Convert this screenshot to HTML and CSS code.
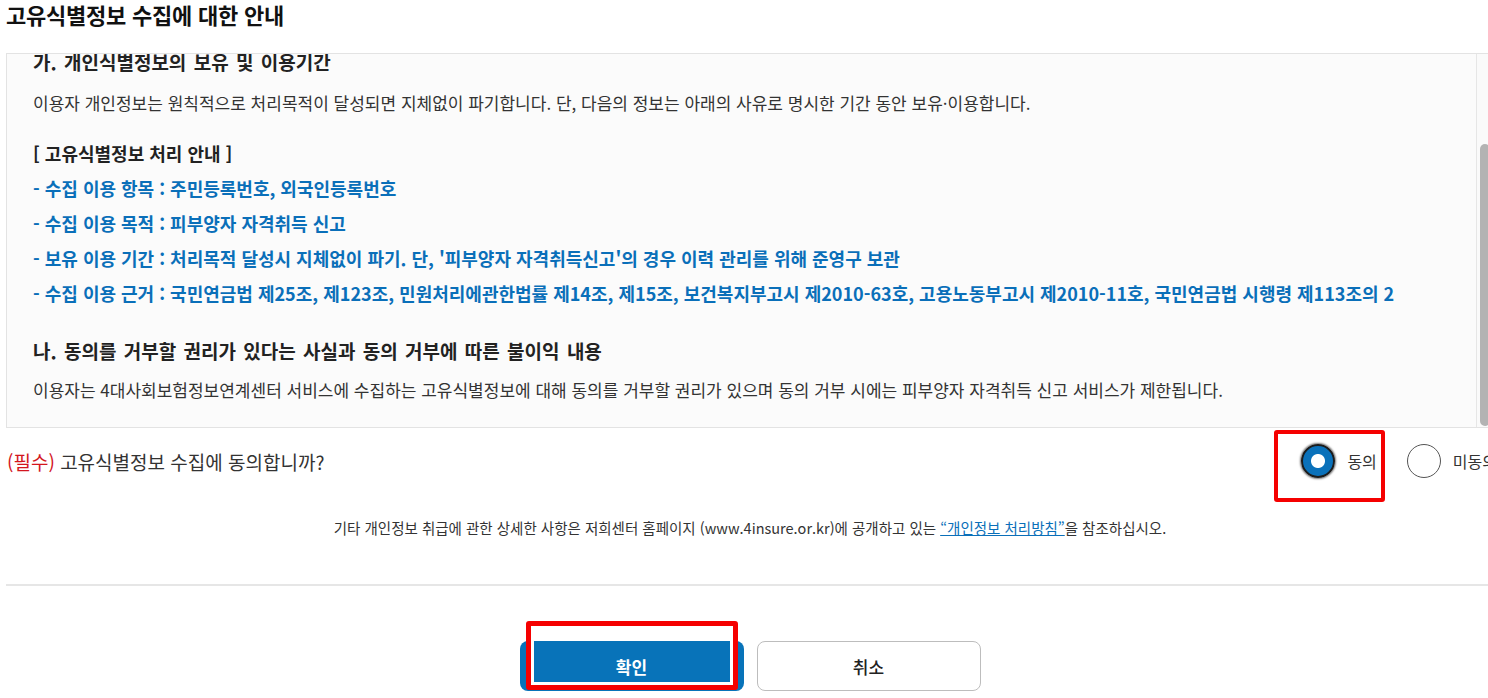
FILE: index.html
```html
<!DOCTYPE html>
<html lang="ko">
<head>
<meta charset="utf-8">
<title>고유식별정보 수집에 대한 안내</title>
<link rel="stylesheet" href="styles.css">
</head>
<body>
<div class="page">
  <h2 class="title">고유식별정보 수집에 대한 안내</h2>
  <div class="terms">
    <div class="terms-view">
      <div class="terms-inner">
        <h3 class="sec-title">가. 개인식별정보의 보유 및 이용기간</h3>
        <p class="txt">이용자 개인정보는 원칙적으로 처리목적이 달성되면 지체없이 파기합니다. 단, 다음의 정보는 아래의 사유로 명시한 기간 동안 보유·이용합니다.</p>
        <h4 class="sub-title">[ 고유식별정보 처리 안내 ]</h4>
        <ul class="blue-list">
          <li>- 수집 이용 항목 : 주민등록번호, 외국인등록번호</li>
          <li>- 수집 이용 목적 : 피부양자 자격취득 신고</li>
          <li>- 보유 이용 기간 : 처리목적 달성시 지체없이 파기. 단, '피부양자 자격취득신고'의 경우 이력 관리를 위해 준영구 보관</li>
          <li>- 수집 이용 근거 : 국민연금법 제25조, 제123조, 민원처리에관한법률 제14조, 제15조, 보건복지부고시 제2010-63호, 고용노동부고시 제2010-11호, 국민연금법 시행령 제113조의 2</li>
        </ul>
        <h3 class="sec-title sec-second">나. 동의를 거부할 권리가 있다는 사실과 동의 거부에 따른 불이익 내용</h3>
        <p class="txt txt-last">이용자는 4대사회보험정보연계센터 서비스에 수집하는 고유식별정보에 대해 동의를 거부할 권리가 있으며 동의 거부 시에는 피부양자 자격취득 신고 서비스가 제한됩니다.</p>
      </div>
    </div>
    <div class="sbar"><div class="sbar-thumb"></div></div>
  </div>

  <div class="agree-row">
    <p class="question"><span class="req">(필수)</span> 고유식별정보 수집에 동의합니까?</p>
    <div class="radios">
      <label class="opt">
        <input class="radio" type="radio" name="agree" checked>
        <span class="opt-label">동의</span>
        <span class="highlight hl-radio"></span>
      </label>
      <label class="opt">
        <input class="radio" type="radio" name="agree">
        <span class="opt-label">미동의</span>
      </label>
    </div>
  </div>

  <p class="notice">기타 개인정보 취급에 관한 상세한 사항은 저희센터 홈페이지 (www.4insure.or.kr)에 공개하고 있는 <a class="notice-link" href="#">“개인정보 처리방침”</a>을 참조하십시오.</p>

  <hr class="divider">

  <div class="btns">
    <button class="btn btn-ok" type="button">확인<span class="highlight hl-ok"></span></button>
    <button class="btn btn-cancel" type="button">취소</button>
  </div>
</div>
</body>
</html>
```
FILE: styles.css
```css
html, body {
  margin: 0;
  padding: 0;
  overflow: hidden;
  background: #fff;
}

body {
  font-family: "Noto Sans CJK KR", "Noto Sans", sans-serif;
  color: #333;
}

.page {
  width: 1488px;
  padding-left: 6px;
}

.title {
  margin: 0;
  font-size: 22px;
  line-height: 28px;
  font-weight: 700;
  color: #111;
  letter-spacing: -0.01em;
}

.terms {
  margin-top: 25px;
  height: 373px;
  border: 1px solid #e3e3e3;
  background: #fbfbfb;
  display: flex;
}

.terms-view {
  flex: 1;
  min-width: 0;
  display: flex;
  flex-direction: column-reverse;
  overflow: hidden;
}

.terms-inner {
  flex: none;
  padding: 0 20px 24px 26px;
}

.sbar {
  flex: none;
  width: 13px;
  border-left: 1px solid #e6e6e6;
  background: #fafafa;
  padding: 0 0 1px 3px;
  display: flex;
  flex-direction: column;
  justify-content: flex-end;
}

.sbar-thumb {
  width: 10px;
  height: 282px;
  border-radius: 5px;
  background: #b3b3b3;
}

.sec-title {
  margin: 0;
  font-size: 19px;
  line-height: 26px;
  font-weight: 700;
  color: #222;
  word-spacing: 2px;
}

.sec-second {
  margin-top: 27px;
}

.txt {
  margin: 15px 0 0;
  font-size: 17px;
  line-height: 26px;
  color: #333;
}

.txt-last {
  margin-top: 13px;
}

.sub-title {
  margin: 24px 0 0;
  font-size: 18px;
  line-height: 26px;
  font-weight: 700;
  color: #222;
}

.blue-list {
  list-style: none;
  margin: 5px 0 0;
  padding: 0;
  font-size: 18px;
  line-height: 35px;
  font-weight: 700;
  color: #0a6fb9;
  white-space: nowrap;
}

.agree-row {
  display: flex;
  align-items: center;
  height: 66px;
}

.question {
  flex: 1;
  margin: 0;
  padding-left: 1px;
  font-size: 19px;
  color: #333;
}

.req {
  color: #d3161e;
}

.radios {
  display: flex;
  align-items: center;
  gap: 30px;
  margin-right: -3px;
}

.opt {
  position: relative;
  display: flex;
  align-items: center;
  gap: 12px;
  font-size: 16px;
  color: #333;
  white-space: nowrap;
}

.radio {
  appearance: none;
  -webkit-appearance: none;
  margin: 0;
  width: 34px;
  height: 34px;
  border-radius: 50%;
  border: 1.5px solid #555;
  background: #fff;
  box-sizing: border-box;
}

.radio:checked {
  border: 2px solid #1c1c1c;
  background: radial-gradient(circle, #fff 0 6.5px, #0a71ba 7.5px);
  box-shadow: 0 0 2px 1px rgba(0, 0, 0, 0.55);
}

.highlight {
  position: absolute;
  box-sizing: border-box;
  border: 4px solid #f50000;
  border-radius: 3px;
  pointer-events: none;
}

.hl-radio {
  left: -27px;
  width: 111px;
  top: -14px;
  bottom: -24px;
}

.notice {
  margin: 24px 0 0;
  text-align: center;
  font-size: 14.5px;
  line-height: 20px;
  color: #333;
}

.notice-link {
  color: #0a6fb9;
  text-decoration: underline;
}

.divider {
  margin: 46px 0 0;
  border: none;
  height: 2px;
  background: #e6e6e6;
}

.btns {
  display: flex;
  justify-content: center;
  gap: 13px;
  margin-top: 55px;
}

.btn {
  position: relative;
  width: 224px;
  height: 50px;
  border-radius: 8px;
  font-family: "Noto Sans CJK KR", "Noto Sans", sans-serif;
  font-size: 17px;
  font-weight: 700;
  cursor: pointer;
}

.btn-ok {
  background: #0873b9;
  border: none;
  color: #fff;
}

.btn-cancel {
  background: #fff;
  border: 1px solid #bdbdbd;
  color: #222;
  font-weight: 500;
}

.hl-ok {
  left: 6px;
  right: 6px;
  top: -20px;
  bottom: 1px;
  border-width: 5px;
  box-shadow: inset 0 0 0 3px #fff;
}
```
